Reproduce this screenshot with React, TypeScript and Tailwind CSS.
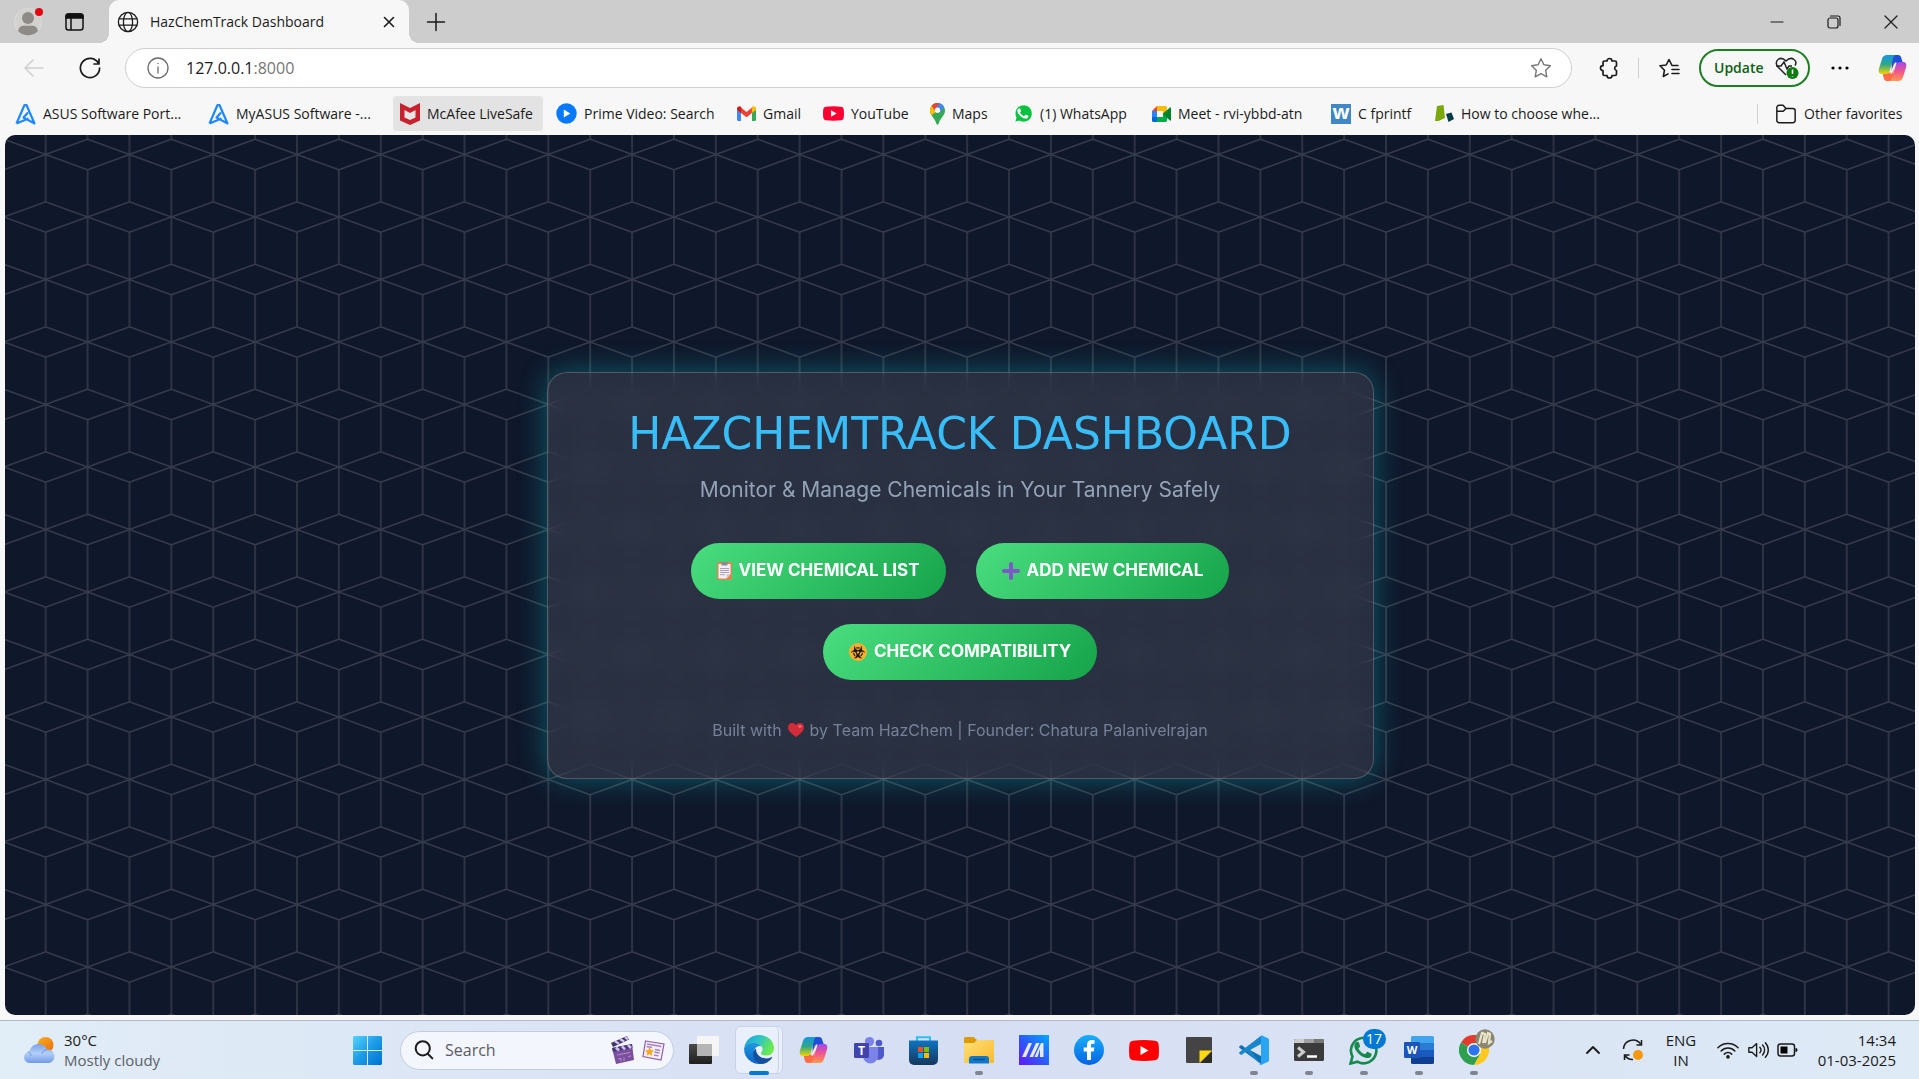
import type { ReactNode } from "react";
import { FaBiohazard } from "react-icons/fa";

const ui = "font-['Open_Sans','Noto_Sans',sans-serif]";

/* ---------- browser chrome icons ---------- */

const Stroke = ({ size = 24, w = 1.5, className = "", children }: { size?: number; w?: number; className?: string; children: ReactNode }) => (
  <svg width={size} height={size} viewBox="0 0 24 24" fill="none" stroke="currentColor" strokeWidth={w} strokeLinecap="round" strokeLinejoin="round" className={className} aria-hidden="true">
    {children}
  </svg>
);

const Profile = () => (
  <svg width="30" height="30" viewBox="0 0 30 30" aria-hidden="true">
    <circle cx="15" cy="15" r="13.500" fill="#d3d1ce" stroke="#dedcd9" />
    <circle cx="15" cy="11" r="6" fill="#8d8a87" />
    <path d="M5 24c1-5 5-6.500 10-6.500s9 1.500 10 6.500a13.500 13.500 0 0 1-20 0z" fill="#8d8a87" />
    <path d="M4 18h22" stroke="#d3d1ce" strokeWidth="1.500" />
    <circle cx="26" cy="5" r="4" fill="#e30613" />
  </svg>
);

const Globe = () => (
  <Stroke size={22} w={1.4}>
    <circle cx="12" cy="12" r="10.500" />
    <ellipse cx="12" cy="12" rx="5" ry="10.500" />
    <path d="M2.300 8.500h19.400M2.300 15.500h19.400" />
  </Stroke>
);

const Asus = () => (
  <svg width="21" height="22" viewBox="0 0 21 22" fill="none" stroke="#1e88ff" strokeWidth="2.200" strokeLinejoin="round" aria-hidden="true">
    <path d="M1.500 20.500 9.500 2h2l8 18.500-11-6 4.500-5M1.500 20.500l12-5" />
  </svg>
);

const McAfee = () => (
  <svg width="20" height="22" viewBox="0 0 20 22" aria-hidden="true">
    <path d="M0 0l10 5 10-5v17.500L10 22 0 17.500z" fill="#c8202d" />
    <path d="M4.500 7l5.500 3 5.500-3v7.500L10 17l-5.500-2.500z" fill="#e6e6e6" />
  </svg>
);

const Prime = () => (
  <svg width="21" height="21" viewBox="0 0 21 21" aria-hidden="true">
    <circle cx="10.500" cy="10.500" r="10.200" fill="#0779ff" />
    <path d="M7.800 6.500v8l6.500-4z" fill="#fff" />
  </svg>
);

const Gmail = () => (
  <svg width="19" height="15" viewBox="0 0 19 15" aria-hidden="true">
    <path d="M0 3v10.500A1.500 1.500 0 0 0 1.500 15H4V5z" fill="#4285f4" />
    <path d="M19 3v10.500a1.500 1.500 0 0 1-1.500 1.500H15V5z" fill="#34a853" />
    <path d="M4 1.500 9.500 6 15 1.500V7L9.500 11.200 4 7z" fill="#ea4335" />
    <path d="M0 2.500C0 .3 2.500-.6 4.200.8V7L0 4z" fill="#c5221f" />
    <path d="M19 2.500C19 .3 16.500-.6 14.800.8V7L19 4z" fill="#fbbc04" />
  </svg>
);

const YouTube = ({ w = 21, h = 15, fill = "#ff0033" }: { w?: number; h?: number; fill?: string }) => (
  <svg width={w} height={h} viewBox="0 0 30 21" aria-hidden="true">
    <path d="M4 .8Q15-.6 26 .8q3.300.4 3.600 3.600.7 6 0 12.200-.3 3.200-3.600 3.600-11 1.400-22 0-3.300-.4-3.600-3.600-.7-6 0-12.200Q.7 1.200 4 .8z" fill={fill} />
    <path d="M11.500 6v9l8-4.500z" fill="#fff" />
  </svg>
);

const MapsPin = () => (
  <svg width="15" height="22" viewBox="0 0 15 22" aria-hidden="true">
    <path d="M7.500 0C11.600 0 15 3.200 15 7.400c0 5.400-5.200 7.600-6.300 13.200-.3 1.500-2.100 1.500-2.400 0C5.200 15 0 12.800 0 7.400 0 3.200 3.400 0 7.500 0z" fill="#34a853" />
    <path d="M1.700 12.200C.7 10.800 0 9.300 0 7.400 0 5.600.6 4 1.700 2.700l5.800 4.700z" fill="#fbbc04" />
    <path d="M1.700 2.700A7.400 7.400 0 0 1 9.700.4L5 8z" fill="#ea4335" />
    <path d="M9.700.3a7.400 7.400 0 0 1 4.400 3.700L9.500 10 5.500 5.300z" fill="#4285f4" />
    <circle cx="7.500" cy="7.300" r="2.700" fill="#fff" />
  </svg>
);

const waPhone = "M8.600 6.600c-.3-.6-.6-.6-.9-.6h-.8c-.3 0-.7.1-1 .5-.400.400-1.300 1.300-1.300 3.100s1.300 3.600 1.500 3.800c.2.300 2.600 4.100 6.300 5.600 3.100 1.200 3.800 1 4.400.9.700-.1 2.200-.9 2.500-1.800.3-.9.3-1.600.2-1.800-.1-.2-.3-.300-.7-.400l-2.500-1.200c-.4-.1-.600-.2-.900.2l-1.200 1.500c-.2.200-.4.300-.8.100-.4-.2-1.600-.600-3-1.800-1.100-1-1.900-2.200-2.100-2.600-.2-.4 0-.6.2-.8l.6-.7.400-.6v-.6z";

const WhatsAppSmall = () => (
  <svg width="19" height="19" viewBox="0 0 26 26" aria-hidden="true">
    <path d="M1 25l1.800-6.400A11.800 11.800 0 1 1 7.400 23.300z" fill="#0bc142" stroke="#fff" strokeWidth="1.200" />
    <path d={waPhone} fill="#fff" />
  </svg>
);

const Meet = () => (
  <svg width="19" height="16" viewBox="0 0 19 16" aria-hidden="true">
    <path d="M0 5l5-5v5z" fill="#ea4335" />
    <path d="M5 0h8.500A1.500 1.500 0 0 1 15 1.500V8l-4-1V5H5z" fill="#fbbc04" />
    <path d="M0 5h5v6H0z" fill="#2684fc" />
    <path d="M0 11h5v5H1.500A1.500 1.500 0 0 1 0 14.500z" fill="#0066da" />
    <path d="M5 11h6V8l4 1v5.500a1.500 1.500 0 0 1-1.500 1.500H5z" fill="#00ac47" />
    <path d="M10.500 8 18 1.500q1-.5 1 .5v12q0 1-1 .5z" fill="#00832d" />
  </svg>
);

const WBadge = () => (
  <span className="flex h-5 w-5 items-center justify-center bg-[#3f88c5] pb-1 text-xl leading-none font-bold text-white" aria-hidden="true">w</span>
);

const HowIcon = () => (
  <svg width="19" height="17" viewBox="0 0 19 17" aria-hidden="true">
    <path d="M2 1 8.500 0 10 13l-6.500 3H0z" fill="#7aa80b" />
    <path d="M11 9l5.500-1.500L19 14l-5.500 3z" fill="#053b45" />
  </svg>
);

const copilotParts = (id: string) => (
  <>
    <defs>
      <linearGradient id={id + "a"} x1="0" y1="0" x2="0" y2="1">
        <stop offset="0" stopColor="#1597e8" />
        <stop offset=".5" stopColor="#2fa886" />
        <stop offset="1" stopColor="#f2d400" />
      </linearGradient>
      <linearGradient id={id + "b"} x1="0" y1="0" x2="0" y2="1">
        <stop offset="0" stopColor="#a348e8" />
        <stop offset=".5" stopColor="#f0568c" />
        <stop offset="1" stopColor="#ff9a4a" />
      </linearGradient>
    </defs>
    <path d="M13 1h7c2.200 0 3 1.500 3.600 4L25 9h-4c-3 0-4 1-5 4l-2 7z" fill="#1d4fd7" />
    <path d="M15 27h-6c-2.200 0-3-1.500-3.500-4L4.500 19H9c3 0 4-1 5-4l2-7z" fill="#ff6b45" />
    <path d="M9 1h9c-1.500 0-2.300 1-3 3.500L12 16c-.8 3-2 4-4.500 4H4.500C1 20 0 18 1 14.500L4 5C5 2 6.500 1 9 1z" fill={`url(#${id}a)`} />
    <path d="M20 27h-9.500c1.500 0 2.800-1 3.500-3.500L17.500 12c.8-3 2-4 4.500-4h2.500c3.500 0 4.500 2 3.500 5.500L25 23c-1 3-2.500 4-5 4z" fill={`url(#${id}b)`} />
    <path d="M17 8.500h1.500L14 19.500h-2z" fill="#f7f7f7" />
  </>
);

const Copilot = ({ id }: { id: string }) => (
  <svg width="29" height="28" viewBox="0 0 29 28" aria-hidden="true">{copilotParts(id)}</svg>
);

const Star = ({ className = "" }: { className?: string }) => (
  <Stroke size={24} w={1.4} className={className}>
    <path d="M12 2.800l2.900 6 6.500.9-4.700 4.600 1.100 6.500L12 17.700l-5.800 3.100 1.100-6.500L2.600 9.700l6.500-.9z" />
  </Stroke>
);

/* ---------- page drawings ---------- */

const CubePattern = () => (
  <svg className="absolute inset-0 h-full w-full" aria-hidden="true">
    <defs>
      <pattern id="cubes" x="-1.200" y="82" width="83.770" height="125" patternUnits="userSpaceOnUse">
        <g fill="none" stroke="#373b4b" strokeWidth="1.500">
          <path d="M0 0 41.880 15.200 83.770 0M0 125l41.880-15.200L83.770 125" />
          <path d="M0 47.300 41.880 62.500 83.770 47.300M0 77.700 41.880 62.500 83.770 77.700" />
          <path d="M41.880 15.200v94.600M0 0v47.300M0 77.700V125M83.770 0v47.300M83.770 77.700V125" />
        </g>
      </pattern>
    </defs>
    <rect width="100%" height="100%" fill="url(#cubes)" />
  </svg>
);

const Clipboard = () => (
  <svg width="15" height="18" viewBox="0 0 15 18" aria-hidden="true">
    <rect width="15" height="18" rx="1.500" fill="#d68b4c" />
    <path d="M1.500 2h12v10l-4 4.500h-8z" fill="#f3eef8" />
    <path d="M13.500 12l-4 4.500V12z" fill="#dcc9c9" />
    <rect x="4.500" y="0" width="6" height="3.500" fill="#8d8792" />
    <path d="M3 6.500h9M3 8.500h9M3 10.500h9M3 12.700h5" stroke="#a9a2b0" />
  </svg>
);

const Plus = () => (
  <svg width="18" height="18" viewBox="0 0 18 18" stroke="#7e57c9" strokeWidth="4" strokeLinecap="round" aria-hidden="true">
    <path d="M9 2v14M2 9h14" />
  </svg>
);

const Biohazard = () => (
  <span className="flex h-[18px] w-[18px] items-center justify-center rounded-full bg-[#fcaf2c] text-[#1c1a18]">
    <FaBiohazard size={14} aria-hidden="true" />
  </span>
);

const Heart = () => (
  <svg width="16" height="14" viewBox="0 0 16 14" className="inline-block" aria-hidden="true">
    <path d="M8 14C3 10.500 0 7.500 0 4.200 0 1.800 1.800 0 4.100 0 5.800 0 7.200.9 8 2.300 8.800.9 10.200 0 11.900 0 14.200 0 16 1.800 16 4.200 16 7.500 13 10.500 8 14z" fill="#d22b3a" />
    <ellipse cx="12" cy="3.500" rx="1.700" ry="1.200" fill="#f0707a" />
  </svg>
);

/* ---------- taskbar icons ---------- */

const Weather = () => (
  <svg width="31" height="27" viewBox="0 0 31 27" aria-hidden="true">
    <defs>
      <linearGradient id="sun" x1="0" y1="0" x2="1" y2="1"><stop stopColor="#f6b01e" /><stop offset="1" stopColor="#ee6a10" /></linearGradient>
      <linearGradient id="cloud" x1="0" y1="0" x2="0" y2="1"><stop stopColor="#7ba1e8" /><stop offset=".5" stopColor="#b2cffa" /><stop offset="1" stopColor="#7299e4" /></linearGradient>
    </defs>
    <circle cx="21.500" cy="8" r="8" fill="url(#sun)" />
    <path d="M6 26a5.700 5.700 0 0 1-.5-11.400C6.500 10 10 7 14.500 7c4.200 0 7 2 8.500 5.500 4.500-.5 7.500 3 7.500 6.700 0 3.800-2.800 6.800-6.500 6.800z" fill="url(#cloud)" />
    <path d="M7 19c-.3-2.500-1.500-4-3-4.300M18 17c.8-2.800 2.500-4.300 5-4.500" stroke="#6f97e0" fill="none" />
  </svg>
);

const Start = () => (
  <svg width="29" height="29" viewBox="0 0 29 29" aria-hidden="true">
    <defs><linearGradient id="win" x1="0" y1="0" x2="1" y2="1"><stop stopColor="#56d3fe" /><stop offset=".5" stopColor="#1c9be6" /><stop offset="1" stopColor="#0070d0" /></linearGradient></defs>
    <path d="M1 0h13v14H0V1zM15 0h13l1 1v13H15zM0 15h14v14H1l-1-1zM15 15h14v13l-1 1H15z" fill="url(#win)" />
  </svg>
);

const Clapper = () => (
  <svg width="26" height="28" viewBox="0 0 26 28" aria-hidden="true">
    <path d="M1 7 17 0l2 3.500L3 11z" fill="#3d3468" />
    <path d="M5 5.300l4 2.500M10 3l4 2.500M15 1l3 2.300" stroke="#cfc4f4" strokeWidth="2.500" />
    <path d="M2 12 22 8l2 16-18 4z" fill="#7b4f9d" />
    <path d="M2 12 22 8l.5 4L3 16z" fill="#4a3a78" />
    <path d="M6 11.500l3 3M12 10.300l3 3M18 9l3 3" stroke="#cfc4f4" strokeWidth="2.500" />
    <path d="M7 19l13-2.500M8 23l3-.6v3M14 21.500v3.500M18 20.500l3-.6" stroke="#b391cd" fill="none" />
  </svg>
);

const News = () => (
  <svg width="23" height="21" viewBox="0 0 23 21" aria-hidden="true">
    <path d="M3.500 1 22 4l-3 16L1 16.500z" fill="#f6eefb" stroke="#8b5fa9" strokeWidth="1.200" />
    <path d="M5 4l14.500 2.500M4.500 6.500 10 7.500M13 9.500l5 1M12.500 12l5 1M12 15l4.500.8" stroke="#a583bf" strokeWidth="1.300" />
    <path d="M7.500 7l1.300 3 3.200.5-2.300 2.200.6 3.200-2.800-1.600-2.900 1.300.6-3.100L3 10.300l3.200-.2z" fill="#f9a81a" />
  </svg>
);

const TaskView = () => (
  <svg width="30" height="28" viewBox="0 0 30 28" aria-hidden="true">
    <defs><linearGradient id="tv" x1="0" y1="0" x2="0" y2="1"><stop stopColor="#4a4a4a" /><stop offset="1" stopColor="#1e1e1e" /></linearGradient></defs>
    <rect y="8" width="23" height="20" rx="1" fill="url(#tv)" />
    <rect x="8" width="22" height="20" rx="1" fill="#f5f5f5" />
    <path d="M8 8h15v12H8z" fill="#b4b4b4" />
  </svg>
);

const Edge = () => (
  <svg width="30" height="30" viewBox="0 0 30 30" aria-hidden="true">
    <defs>
      <linearGradient id="e1" x1="0" y1="0" x2="1" y2=".4"><stop stopColor="#1b9de2" /><stop offset=".5" stopColor="#2cc3c9" /><stop offset="1" stopColor="#6bea4d" /></linearGradient>
      <linearGradient id="e2" x1="0" y1="0" x2="0" y2="1"><stop stopColor="#1f98de" /><stop offset="1" stopColor="#0a62c4" /></linearGradient>
    </defs>
    <path d="M.2 13C1.200 5.300 7.500 0 15 0c8.500 0 15 6 15 13 0 4.500-3.300 7.500-7.500 7.500-3 0-5.500-1-5.500-2.300 0-1 1.500-1.500 1.500-4 0-3-3.200-5.700-7.500-5.700C6 8.500 1.500 10.300.2 13z" fill="url(#e1)" />
    <path d="M.1 13.500C1.500 9.500 6 7.800 10.500 8c3 .1 5.500 1.300 7 3.200-4.500-.7-7.500 2-7.500 6.300 0 6.300 6 11 12.300 9.600A15 15 0 0 1 .1 13.500z" fill="url(#e2)" />
    <path d="M12 13.500c-2.500 1.800-3.300 5-2.300 8.500 1.300 4.500 6 7.700 11 6.500 3.500-1.200 5.800-3.300 7.300-5.700.3-.6-.2-1-.8-.6-3 1.600-6.700 1.600-9.700.2-3.500-1.600-5.700-5-5.500-8.900z" fill="#124fa0" />
  </svg>
);

const Teams = () => (
  <svg width="30" height="27" viewBox="0 0 30 27" aria-hidden="true">
    <circle cx="25" cy="6" r="3.300" fill="#5059c9" />
    <path d="M20 10h10v8a5 5 0 0 1-7 4.500z" fill="#5059c9" />
    <circle cx="15.500" cy="4.600" r="4.600" fill="#7b83eb" />
    <path d="M9 10h15v9a7.500 7.500 0 0 1-15 0z" fill="#7b83eb" />
    <rect y="6" width="15" height="15" rx="1.200" fill="#4045ae" />
    <text x="7.500" y="18" textAnchor="middle" fontSize="12" fontWeight="700" fill="#fff" fontFamily="Open Sans, sans-serif">T</text>
  </svg>
);

const Store = () => (
  <svg width="29" height="29" viewBox="0 0 29 29" aria-hidden="true">
    <defs><linearGradient id="st" x1="0" y1="0" x2="0" y2="1"><stop stopColor="#0e74c0" /><stop offset="1" stopColor="#17365f" /></linearGradient></defs>
    <path d="M8 6V1.200h13V6" fill="none" stroke="#2ac0f2" strokeWidth="2" />
    <path d="M0 4.500h29V24a5 5 0 0 1-5 5H5a5 5 0 0 1-5-5z" fill="url(#st)" />
    <path d="M9 11h5v5H9z" fill="#f1511b" /><path d="M15 11h5v5h-5z" fill="#80bb0a" />
    <path d="M9 17h5v5H9z" fill="#05a5ee" /><path d="M15 17h5v5h-5z" fill="#fbbb0b" />
  </svg>
);

const Folder = () => (
  <svg width="30" height="27" viewBox="0 0 30 27" aria-hidden="true">
    <defs><linearGradient id="fo" x1="0" y1="0" x2="1" y2="1"><stop stopColor="#ffdf79" /><stop offset="1" stopColor="#f7bb2e" /></linearGradient></defs>
    <path d="M0 1.500Q0 0 1.500 0h8l3.500 3h16q1 0 1 1v3H0z" fill="#dc9a08" />
    <path d="M0 6h10l3-3h16q1 0 1 1v22H1q-1 0-1-1z" fill="url(#fo)" />
    <path d="M5 26.500V22q0-3 3-3h14q3 0 3 3v4.500z" fill="#0f78c8" />
    <path d="M9 22.500h12" stroke="#084c8b" strokeWidth="1.500" />
  </svg>
);

const MyAsus = () => (
  <svg width="30" height="30" viewBox="0 0 30 30" aria-hidden="true">
    <defs><linearGradient id="ma" x1="0" y1="1" x2="1" y2="0"><stop stopColor="#6517fa" /><stop offset=".5" stopColor="#2b5cfa" /><stop offset="1" stopColor="#00a8ff" /></linearGradient></defs>
    <path d="M0 0h30v30H0z" fill="url(#ma)" />
    <path d="M3 22 9.500 8H13L7 22zM10.500 22 17 8h3.500l-6.500 14zM15.500 22 22 8h2.500v14H21v-8l-2.500 8z" fill="#e6e9ff" />
  </svg>
);

const Facebook = () => (
  <svg width="30" height="30" viewBox="0 0 30 30" aria-hidden="true">
    <defs><linearGradient id="fb" x1="0" y1="0" x2="0" y2="1"><stop stopColor="#19aefb" /><stop offset="1" stopColor="#0463e4" /></linearGradient></defs>
    <circle cx="15" cy="15" r="15" fill="url(#fb)" />
    <path d="M13 25v-8.500H9.700v-4H13V10c0-3.300 2-5 5-5 1 0 2 .1 2.500.2v3.600h-1.800c-1.400 0-1.800.8-1.800 1.800v1.900h3.500l-.7 4h-2.800V25z" fill="#fff" />
  </svg>
);

const Sticky = () => (
  <svg width="26" height="26" viewBox="0 0 26 26" aria-hidden="true">
    <path d="M0 1q0-1 1-1h24q1 0 1 1v13L14 26H1q-1 0-1-1z" fill="#444" />
    <path d="M26 14v11q0 1-1 1H14z" fill="#2d2a22" />
    <path d="M13.500 13.500H26L13.500 26z" fill="#ffd90a" />
  </svg>
);

const VSCode = () => (
  <svg width="30" height="30" viewBox="0 0 30 30" aria-hidden="true">
    <path d="M21.500 1 7.500 13.800 2.500 10 .3 11.200v1.600L22 29V21L11 15z" fill="#0f6fb5" />
    <path d="M21.500 29 7.500 16.200l-5 3.800L.3 18.800v-1.600L22 1v8l-11 6z" fill="#1786ca" />
    <path d="M22 0l7 3.200q1 .5 1 1.600v20.400q0 1.100-1 1.600L22 30q-1 0-1.500-.8L22 28z" fill="#2aa5f3" />
  </svg>
);

const Terminal = () => (
  <svg width="30" height="22" viewBox="0 0 30 22" aria-hidden="true">
    <rect width="30" height="22" rx="1.500" fill="#3b3b3b" />
    <path d="M0 4V1.500Q0 0 1.500 0H10v4z" fill="#ccc" /><path d="M10 0h10v4H10z" fill="#a0a0a0" /><path d="M20 0h8.500Q30 0 30 1.500V4H20z" fill="#777" />
    <path d="M4 8.500l5.500 4.500L4 17.500" fill="none" stroke="#ccc" strokeWidth="3" />
    <path d="M13 17.500h10" stroke="#fff" strokeWidth="2.500" />
  </svg>
);

const WhatsAppBig = () => (
  <span className="relative block">
    <svg width="30" height="30" viewBox="0 0 26 26" aria-hidden="true">
      <path d="M1.300 24.700l1.700-6A11 11 0 1 1 7.300 23.100z" fill="none" stroke="#17884f" strokeWidth="2.300" />
      <path d={waPhone} fill="#17884f" />
    </svg>
    <span className="absolute -top-1.5 left-3.5 flex h-5 w-[23px] items-center justify-center rounded-full bg-[#0078d4] text-sm leading-none text-white">17</span>
  </span>
);

const Word = () => (
  <svg width="30" height="28" viewBox="0 0 30 28" aria-hidden="true">
    <path d="M7 1.500Q7 0 8.500 0h20Q30 0 30 1.500V7H7z" fill="#41a5ee" /><path d="M7 7h23v7H7z" fill="#2b7cd3" />
    <path d="M7 14h23v7H7z" fill="#185abd" /><path d="M7 21h23v5.500q0 1.500-1.500 1.500h-20Q7 28 7 26.500z" fill="#103f91" />
    <rect y="6" width="16" height="16" rx="1.300" fill="#1a55b8" />
    <text x="8" y="18" textAnchor="middle" fontSize="11" fontWeight="700" fill="#fff" fontFamily="Open Sans, sans-serif">W</text>
  </svg>
);

const Chrome = () => (
  <span className="relative block">
    <svg width="30" height="30" viewBox="0 0 30 30" aria-hidden="true">
      <path d="M15 15 2 7.500A15 15 0 0 1 28 7.500L15 8z" fill="#e33b2e" />
      <path d="M2 7.500A15 15 0 0 0 15 30l6.500-11.200L15 15z" fill="#2f9e4f" />
      <path d="M28 7.500A15 15 0 0 1 15 30l6.500-11.200L15 8z" fill="#fdc921" />
      <circle cx="15" cy="15" r="7" fill="#fff" /><circle cx="15" cy="15" r="5.600" fill="#2f73ee" />
    </svg>
    <svg width="20" height="20" viewBox="0 0 20 20" className="absolute -top-1.5 left-4" aria-hidden="true">
      <circle cx="10" cy="10" r="9.700" fill="#8b8670" />
      <path d="M4 15 7 4l3 1-2 9M10 14l3-10 2 1-1 9 3-2" stroke="#e9e4cc" strokeWidth="2.200" fill="none" />
    </svg>
  </span>
);

/* ---------- data ---------- */

const bookmarks: { label: string; icon: ReactNode; width: string; active?: boolean }[] = [
  { label: "ASUS Software Port...", icon: <Asus />, width: "w-[193px]" },
  { label: "MyASUS Software -...", icon: <Asus />, width: "w-[185px]" },
  { label: "McAfee LiveSafe", icon: <McAfee />, width: "w-[150px]", active: true },
  { label: "Prime Video: Search", icon: <Prime />, width: "w-[181px]" },
  { label: "Gmail", icon: <Gmail />, width: "w-[86px]" },
  { label: "YouTube", icon: <YouTube />, width: "w-[107px]" },
  { label: "Maps", icon: <MapsPin />, width: "w-[84px]" },
  { label: "(1) WhatsApp", icon: <WhatsAppSmall />, width: "w-[138px]" },
  { label: "Meet - rvi-ybbd-atn", icon: <Meet />, width: "w-[179px]" },
  { label: "C fprintf", icon: <WBadge />, width: "w-[104px]" },
  { label: "How to choose whe...", icon: <HowIcon />, width: "w-[180px]" },
];

const apps: { name: string; icon: ReactNode; running?: boolean; active?: boolean }[] = [
  { name: "Task view", icon: <TaskView /> },
  { name: "Edge", icon: <Edge />, active: true },
  { name: "Copilot", icon: <Copilot id="ct" /> },
  { name: "Teams", icon: <Teams /> },
  { name: "Store", icon: <Store /> },
  { name: "File Explorer", icon: <Folder />, running: true },
  { name: "MyASUS", icon: <MyAsus /> },
  { name: "Facebook", icon: <Facebook /> },
  { name: "YouTube", icon: <YouTube w={30} h={21} fill="#ff0000" /> },
  { name: "Sticky Notes", icon: <Sticky /> },
  { name: "VS Code", icon: <VSCode />, running: true },
  { name: "Terminal", icon: <Terminal />, running: true },
  { name: "WhatsApp", icon: <WhatsAppBig />, running: true },
  { name: "Word", icon: <Word />, running: true },
  { name: "Chrome", icon: <Chrome />, running: true },
];

/* ---------- sections ---------- */

function TabStrip() {
  return (
    <header className="flex h-[43px] items-center bg-[#cdcdcd] pl-[13px] text-[#1b1b1b]">
      <button aria-label="Profile"><Profile /></button>
      <button aria-label="Tab actions" className="ml-[21px]">
        <svg width="22" height="22" viewBox="0 0 22 22" fill="none" stroke="#111" strokeWidth="1.500" aria-hidden="true">
          <rect x="2" y="3" width="17" height="16" rx="2.500" />
          <path d="M2 5.500Q2 3 4.500 3h12Q19 3 19 5.500V7H2z" fill="#111" />
          <path d="M7 7v12" />
        </svg>
      </button>
      <div className="relative ml-[23px] flex h-full w-[300px] items-center self-end rounded-t-[10px] bg-[#f7f7f7] pr-2 pl-2">
        <span className="absolute bottom-0 -left-2.5 h-2.5 w-2.5 bg-[radial-gradient(circle_at_0_0,#cdcdcd_10px,#f7f7f7_10px)]" />
        <span className="absolute -right-2.5 bottom-0 h-2.5 w-2.5 bg-[radial-gradient(circle_at_100%_0,#cdcdcd_10px,#f7f7f7_10px)]" />
        <Globe />
        <span className="ml-[11px] flex-1 text-sm">HazChemTrack Dashboard</span>
        <button aria-label="Close tab"><Stroke size={24} w={1.6}><path d="M7.500 7.500l9 9M16.500 7.500l-9 9" /></Stroke></button>
      </div>
      <button aria-label="New tab" className="ml-[15px]"><Stroke size={24} w={1.5}><path d="M12 3.500v17M3.500 12h17" /></Stroke></button>
      <div className="ml-auto flex">
        <button aria-label="Minimize" className="flex w-[57px] justify-center"><Stroke size={24} w={1.2}><path d="M6 12h12" /></Stroke></button>
        <button aria-label="Restore" className="flex w-[57px] justify-center">
          <Stroke size={24} w={1.2}><rect x="6" y="8" width="10" height="10" rx="2" /><path d="M8.500 6H16a2 2 0 0 1 2 2v7.500" /></Stroke>
        </button>
        <button aria-label="Close" className="flex w-[57px] justify-center"><Stroke size={24} w={1.2}><path d="M6 6l12 12M18 6 6 18" /></Stroke></button>
      </div>
    </header>
  );
}

function Toolbar() {
  return (
    <div className="flex h-[50px] items-center pr-[12px] pl-[22px] text-[#1b1b1b]">
      <button aria-label="Back" className="text-[#cfcfcf]"><Stroke size={24} w={1.5}><path d="M21 12H3M11 4l-8 8 8 8" /></Stroke></button>
      <button aria-label="Refresh" className="ml-8"><Stroke size={24} w={1.7}><path d="M20.500 7.500A9.600 9.600 0 1 0 21.600 12M21 3v5h-5" /></Stroke></button>
      <form className="ml-[23px] flex h-10 min-w-0 flex-1 items-center rounded-full border border-[#cfcfcf] bg-white pr-[18px] pl-5">
        <Stroke size={24} w={1.3} className="text-[#6b6b6b]"><circle cx="12" cy="12" r="10" /><path d="M12 11v6M12 7.300v.3" /></Stroke>
        <span className="ml-4 text-base leading-6">127.0.0.1<span className="text-[#767676]">:8000</span></span>
        <input aria-label="Address" className="ml-1 min-w-0 flex-1 bg-transparent outline-none" />
        <button type="button" aria-label="Favorite this page"><Star className="text-[#767676]" /></button>
      </form>
      <button aria-label="Extensions" className="ml-[25px]">
        <Stroke size={24} w={1.7}><path d="M9 5h1a2.500 2.500 0 0 1 5 0h3a1.500 1.500 0 0 1 1.500 1.500V10a2.300 2.300 0 0 0 0 4.500V18a1.500 1.500 0 0 1-1.500 1.500h-3a2.500 2.500 0 0 1-5 0H7.500A1.500 1.500 0 0 1 6 18v-3.300a2.500 2.500 0 0 1 0-5V6.500A1.500 1.500 0 0 1 7.500 5z" /></Stroke>
      </button>
      <span className="ml-[17px] h-5 w-px bg-[#cfcfcf]" />
      <button aria-label="Favorites" className="ml-[18px]">
        <Stroke size={24} w={1.6}><path d="M21 9.500h-6L12 3.500 9.200 9 3 9.800l4.500 4.400-1.200 6.300 4.700-2.600M15 13.500h7M15 17.500h7" /></Stroke>
      </button>
      <button className="ml-[18px] flex h-[38px] w-[111px] items-center rounded-full border-2 border-[#1c7f22] pl-[13px] text-sm font-semibold text-[#0f5f14]">
        Update
        <svg width="26" height="26" viewBox="0 0 26 26" fill="none" className="ml-2.5" aria-hidden="true">
          <path d="M12 20 4 12C1.500 9 2 6 4 4.500c2.500-2 5.500-1 8 1.500 2.500-2.500 5.500-3.500 8-1.500 2 1.500 2.300 4 1 6M2 11h5l3-4 3 7 2-3h3" stroke="#222" strokeWidth="1.500" />
          <circle cx="18.500" cy="18" r="6" fill="#107c10" />
          <path d="M18.500 14.500V19M18.500 21v.6" stroke="#fff" strokeWidth="1.500" />
        </svg>
      </button>
      <button aria-label="Settings and more" className="ml-[18px]">
        <svg width="24" height="24" viewBox="0 0 24 24" aria-hidden="true"><circle cx="5" cy="12" r="1.600" /><circle cx="12" cy="12" r="1.600" /><circle cx="19" cy="12" r="1.600" /></svg>
      </button>
      <button aria-label="Copilot" className="ml-[26px]"><Copilot id="cb" /></button>
    </div>
  );
}

function BookmarksBar() {
  return (
    <nav className="flex h-[42px] items-center pb-px pl-[15px] text-sm text-[#1b1b1b]">
      {bookmarks.map((b) => (
        <div key={b.label} className={`${b.width} shrink-0 ${b.active ? "mr-[13px]" : ""}`}>
          <a href="#" className={`flex items-center gap-[7px] whitespace-nowrap ${b.active ? "h-[35px] rounded bg-[#e3e3e3] pl-[7px]" : ""}`}>
            {b.icon}
            {b.label}
          </a>
        </div>
      ))}
      <span className="ml-auto h-5 w-px shrink-0 bg-[#cfcfcf]" />
      <a href="#" className="ml-[17px] flex w-[144px] shrink-0 items-center gap-[7px] whitespace-nowrap">
        <Stroke size={22} w={1.6}><path d="M2 19V5a2.500 2.500 0 0 1 2.500-2.500h4.300L12 6h7.500A2.500 2.500 0 0 1 22 8.500V19a2.500 2.500 0 0 1-2.500 2.500h-15A2.500 2.500 0 0 1 2 19zM2 9h7l3-3" /></Stroke>
        Other favorites
      </a>
    </nav>
  );
}

function Action({ icon, children }: { icon: ReactNode; children: ReactNode }) {
  return (
    <button className="flex h-14 items-center gap-[7px] rounded-full bg-linear-[135deg] from-[#4ade80] to-[#16a34a] px-[26px] text-[17px] font-bold text-white uppercase">
      {icon}
      {children}
    </button>
  );
}

function Dashboard() {
  return (
    <main className="relative mr-1 mb-[5px] ml-[5px] flex flex-1 items-center justify-center overflow-hidden rounded-[10px] bg-[#0f172a] font-['Inter',sans-serif]">
      <CubePattern />
      <section className="relative w-full max-w-[827px] rounded-[20px] border border-white/20 bg-white/10 px-8 pt-8 pb-9 text-center shadow-[0_0_30px_rgba(0,255,255,0.3)] backdrop-blur-[12px]">
        <h1 className="font-['DejaVu_Sans',sans-serif] text-[44px] leading-[58px] whitespace-nowrap text-[#38bdf8] uppercase">HazChemTrack Dashboard</h1>
        <p className="mt-3 text-[21px] leading-[30px] text-[#94a3b8]">Monitor &amp; Manage Chemicals in Your Tannery Safely</p>
        <div className="mt-[38px] flex flex-wrap justify-center gap-x-[30px] gap-y-[25px] px-16">
          <Action icon={<Clipboard />}>View Chemical List</Action>
          <Action icon={<Plus />}>Add New Chemical</Action>
          <Action icon={<Biohazard />}>Check Compatibility</Action>
        </div>
        <p className="mt-[38px] flex items-center justify-center gap-1.5 text-base leading-6 text-[#75829a]">
          <span>Built with</span> <Heart /> <span>by Team HazChem | Founder: Chatura Palanivelrajan</span>
        </p>
      </section>
    </main>
  );
}

function Taskbar() {
  return (
    <footer className="flex h-[59px] items-center border-t border-[#aeb9c9] bg-linear-to-r from-[#e1edf7] via-[#d6def3] via-50% to-[#deeaf6] text-[15px] text-[#1b1b1b]">
      <button className="flex w-[340px] shrink-0 items-center gap-[9px] pl-6 text-left leading-5">
        <Weather />
        <span>30°C<br /><span className="text-[#5c6066]">Mostly cloudy</span></span>
      </button>
      <button aria-label="Start" className="flex w-[55px] justify-center"><Start /></button>
      <label className="ml-[5px] flex h-[39px] w-[274px] items-center rounded-full border border-[#c3cde0] bg-[#f3f6fd] pr-2 pl-[13px]">
        <Stroke size={20} w={2.4}><circle cx="10.500" cy="10" r="8.500" /><path d="M16.500 16.500 22 22" /></Stroke>
        <input type="search" placeholder="Search" className="ml-[11px] min-w-0 flex-1 bg-transparent text-base outline-none placeholder:text-[#5a5d63]" />
        <Clapper />
        <span className="ml-1.5"><News /></span>
      </label>
      <div className="ml-0.5 flex h-full">
        {apps.map((a) => (
          <button key={a.name} aria-label={a.name} className="relative flex h-full w-[55px] items-center justify-center">
            {a.active && <span className="absolute top-[5px] left-1 h-12 w-12 rounded-md border border-[#c6d3ea] bg-[#eaf0fb]" />}
            {a.active && <span className="absolute top-[5px] left-1 h-12 w-11 rounded-md border-r border-[#c6d3ea]" />}
            <span className="relative">{a.icon}</span>
            {a.active && <span className="absolute bottom-1 h-1 w-5 rounded-full bg-[#0078d4]" />}
            {a.running && <span className="absolute bottom-1 h-1 w-2 rounded-full bg-[#7f858f]" />}
          </button>
        ))}
      </div>
      <div className="ml-auto flex items-center pr-[23px] leading-5">
        <button aria-label="Hidden icons"><Stroke size={24} w={1.9}><path d="M6 15l6-6 6 6" /></Stroke></button>
        <button aria-label="Sync" className="ml-4">
          <svg width="24" height="24" viewBox="0 0 24 24" fill="none" stroke="#1b1b1b" strokeWidth="1.500" aria-hidden="true">
            <path d="M2.500 11a9.500 9.500 0 0 1 17-5.200M20.500 2v5h-5M3.500 22v-5h5M4 17.500a9 9 0 0 0 8 4" />
            <circle cx="17" cy="17" r="5" fill="#f7980b" stroke="none" />
          </svg>
        </button>
        <button className="ml-[20px] w-[32px] text-center">ENG<br />IN</button>
        <button aria-label="Network, sound and battery" className="ml-[20px] flex items-center gap-2">
          <Stroke size={22} w={1.6}><path d="M1 9.500a15.500 15.500 0 0 1 22 0M4.500 13a10.500 10.500 0 0 1 15 0M8 16.500a5.600 5.600 0 0 1 8 0" /><circle cx="12" cy="19.500" r="1.200" fill="currentColor" /></Stroke>
          <Stroke size={22} w={1.5}><path d="M2 9.500v5h3.500l5 4.500V5l-5 4.500zM14 9a4.500 4.500 0 0 1 0 6M17 6.500a8 8 0 0 1 0 11M20 4a11.500 11.500 0 0 1 0 16" /></Stroke>
          <svg width="21" height="14" viewBox="0 0 21 14" aria-hidden="true">
            <rect x="1" y="1" width="16.500" height="12" rx="2.500" fill="none" stroke="#1b1b1b" strokeWidth="1.500" />
            <path d="M3.500 3.500h7v7h-7z" /><path d="M18.500 5q2 0 2 2t-2 2z" />
          </svg>
        </button>
        <button className="ml-[16px] min-w-[82px] text-right">14:34<br />01-03-2025</button>
      </div>
    </footer>
  );
}

export default function App() {
  return (
    <div className={`flex min-h-screen flex-col bg-[#f7f7f7] ${ui}`}>
      <TabStrip />
      <Toolbar />
      <BookmarksBar />
      <Dashboard />
      <Taskbar />
    </div>
  );
}
